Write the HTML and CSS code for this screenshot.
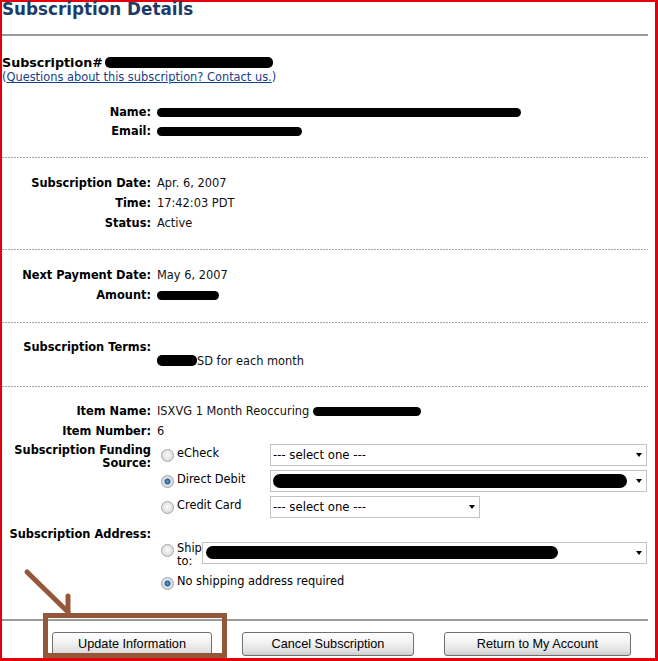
FILE: index.html
```html
<!DOCTYPE html>
<html>
  <head>
    <title>Subscription Details</title>
    <meta charset="UTF-8" />
    <link rel="stylesheet" href="styles.css">
  </head>
  <body>
    <div class="frame">
      <h1>Subscription Details</h1>
      <hr class="rule" />

      <div class="sub-head">
        <p class="sub-no">Subscription#<span class="redact r-subno"></span></p>
        <p class="contact">(<a href="#">Questions about this subscription? Contact us.</a>)</p>
      </div>

      <div class="section s-contact">
        <div class="row"><span class="label">Name:</span><span class="value"><span class="redact r-name"></span></span></div>
        <div class="row"><span class="label">Email:</span><span class="value"><span class="redact r-email"></span></span></div>
      </div>

      <div class="section s-dates">
        <div class="row"><span class="label">Subscription Date:</span><span class="value">Apr. 6, 2007</span></div>
        <div class="row"><span class="label">Time:</span><span class="value">17:42:03 PDT</span></div>
        <div class="row"><span class="label">Status:</span><span class="value">Active</span></div>
      </div>

      <div class="section s-payment">
        <div class="row"><span class="label">Next Payment Date:</span><span class="value">May 6, 2007</span></div>
        <div class="row"><span class="label">Amount:</span><span class="value"><span class="redact r-amount"></span></span></div>
      </div>

      <div class="section s-terms">
        <div class="row"><span class="label">Subscription Terms:</span><span class="value terms"><span class="redact r-terms"></span>SD for each month</span></div>
      </div>

      <div class="section s-item">
        <div class="row"><span class="label">Item Name:</span><span class="value">ISXVG 1 Month Reoccuring <span class="redact r-item"></span></span></div>
        <div class="row"><span class="label">Item Number:</span><span class="value">6</span></div>

        <div class="row funding">
          <span class="label two-line">Subscription Funding Source:</span>
          <div class="options">
            <div class="option">
              <label class="opt-label"><input type="radio" name="funding" /><span>eCheck</span></label>
              <div class="select w-full"><select><option>--- select one ---</option></select></div>
            </div>
            <div class="option">
              <label class="opt-label"><input type="radio" name="funding" checked /><span>Direct Debit</span></label>
              <div class="select w-full"><select><option></option></select><span class="redact r-bank"></span></div>
            </div>
            <div class="option">
              <label class="opt-label"><input type="radio" name="funding" /><span>Credit Card</span></label>
              <div class="select w-card"><select><option>--- select one ---</option></select></div>
            </div>
          </div>
        </div>

        <div class="row address"><span class="label">Subscription Address:</span><span class="value"></span></div>
        <div class="row ship">
          <span class="label"></span>
          <div class="option">
            <label class="opt-label ship-label"><input type="radio" name="shipping" /><span>Ship to:</span></label>
            <div class="select w-ship"><select><option></option></select><span class="redact r-addr"></span></div>
          </div>
        </div>
        <div class="row no-ship">
          <span class="label"></span>
          <label class="opt-label"><input type="radio" name="shipping" checked /><span>No shipping address required</span></label>
        </div>
      </div>

      <hr class="rule bottom-rule" />

      <div class="buttons">
        <button class="btn b-update">Update Information</button>
        <button class="btn b-cancel">Cancel Subscription</button>
        <button class="btn b-return">Return to My Account</button>
      </div>

      <!-- hand-drawn marker pointing at the update button -->
      <svg class="marker" width="658" height="661" viewBox="0 0 658 661">
        <g fill="none" stroke="#96563a" stroke-width="5" stroke-linecap="round">
          <rect x="45.5" y="615.5" width="179" height="40" stroke-linecap="butt" />
          <line x1="27" y1="572" x2="68" y2="612" />
          <line x1="68" y1="596" x2="68" y2="612" />
        </g>
      </svg>
    </div>
  </body>
</html>
```

FILE: styles.css
```css
body {
  margin: 0;
  background: #fff;
  color: #000;
  font-family: "DejaVu Sans", Verdana, sans-serif;
  font-size: 11.4px;
}
.frame {
  position: relative;
  width: 658px;
  height: 661px;
  box-sizing: border-box;
  border: 2px solid #e2000c;
  border-right-width: 3px;
  border-bottom-width: 3px;
  padding-right: 7px;
}
h1 {
  margin: -3px 0 0;
  font-size: 16.8px;
  line-height: 20px;
  color: #1b3b68;
}
.rule {
  margin: 15px 0 0;
  border: 0;
  height: 2px;
  background: #9a9a9a;
}
.sub-head {
  margin-top: 20px;
}
.sub-no {
  margin: 0;
  font-size: 12.7px;
  font-weight: bold;
  line-height: 14px;
}
.contact {
  margin: 0;
  line-height: 14px;
  color: #17408a;
}
.contact a {
  color: inherit;
}

/* dotted separator under each block */
.section {
  background: repeating-linear-gradient(90deg, #a5a5a5 0 2px, transparent 2px 3px) left bottom / 100% 1px no-repeat;
}
.s-contact { padding: 19px 0 17px; }
.s-dates { padding: 15px 0 17px; }
.s-payment { padding: 15px 0 18px; }
.s-terms { padding: 14px 0 16px; }
.s-item { padding: 14px 0 0; background: none; }

.row {
  display: grid;
  grid-template-columns: 149px 1fr;
  column-gap: 6px;
  line-height: 20px;
}
.s-contact .row {
  line-height: 19px;
}
.label {
  font-weight: bold;
  text-align: right;
}
.value {
  color: #111;
}
.terms {
  margin-top: 14px;
}

.redact {
  display: inline-block;
  background: #000;
  border-radius: 5px;
  height: 9px;
  vertical-align: -1px;
}
.r-subno { width: 168px; height: 11px; margin-left: 2px; vertical-align: -1px; }
.r-name { width: 364px; }
.r-email { width: 145px; }
.r-amount { width: 62px; }
.r-terms { width: 40px; height: 11px; }
.r-item { width: 108px; }

/* funding and address choices */
.funding {
  margin-top: 3px;
}
.two-line {
  line-height: 13px;
}
.options {
  display: flex;
  flex-direction: column;
  gap: 4px;
}
.option {
  display: flex;
  align-items: flex-start;
}
.opt-label {
  display: flex;
  align-items: flex-start;
  width: 113px;
  line-height: 18px;
}
.opt-label input {
  appearance: none;
  width: 13px;
  height: 13px;
  margin: 5px 3px 0 4px;
  border: 1px solid #a3a3a3;
  border-radius: 50%;
  box-sizing: border-box;
  background: radial-gradient(circle at 50% 45%, #fafafa 0, #dedede 70%, #cfcfcf 100%);
  flex: none;
}
.opt-label input:checked {
  background: radial-gradient(circle at 50% 50%, #5aa2d8 0, #1f5c96 2.6px, #dfe6ec 3.4px, #d0d0d0 100%);
}
.select {
  position: relative;
  height: 22px;
  box-sizing: border-box;
  border: 1px solid #c2c2c2;
  background: #fff;
}
.select select {
  appearance: none;
  width: 100%;
  height: 100%;
  border: 0;
  padding: 0 0 0 2px;
  background: transparent;
  font-family: "DejaVu Sans", Verdana, sans-serif;
  font-size: 11.7px;
  color: #000;
}
.select::after {
  content: "";
  position: absolute;
  right: 4px;
  top: 8px;
  border-left: 3.5px solid transparent;
  border-right: 3.5px solid transparent;
  border-top: 4px solid #000;
}
.w-full { width: 377px; }
.w-card { width: 210px; }
.w-ship { width: 445px; }
.r-bank {
  position: absolute;
  left: 2px;
  top: 3px;
  width: 354px;
  height: 14px;
  border-radius: 7px;
}
.r-addr {
  position: absolute;
  left: 3px;
  top: 3px;
  width: 352px;
  height: 13px;
  border-radius: 7px;
}

.address {
  margin-top: 6px;
}
.ship {
  margin-top: -2px;
}
.ship-label {
  width: 45px;
  line-height: 13px;
}
.ship-label input {
  margin-top: 2px;
}
.ship-label span {
  width: 25px;
}
.no-ship {
  margin-top: 3px;
}
.no-ship .opt-label {
  width: auto;
  line-height: 20px;
}
.no-ship .opt-label input {
  margin-top: 6px;
}

.bottom-rule {
  margin-top: 28px;
}
.buttons {
  display: flex;
  gap: 30px;
  margin-top: 11px;
  padding-left: 50px;
}
.btn {
  height: 24px;
  padding: 0;
  border: 1px solid #6f6f6f;
  border-radius: 3px;
  background: linear-gradient(#ffffff, #f1f1f1 45%, #e2e2e2 80%, #cdcdcd);
  font-family: "Liberation Sans", Arial, sans-serif;
  font-size: 12.7px;
  color: #000;
}
.b-update { width: 160px; }
.b-cancel { width: 172px; }
.b-return { width: 187px; }

.marker {
  position: absolute;
  left: -2px;
  top: -2px;
  pointer-events: none;
}
```
